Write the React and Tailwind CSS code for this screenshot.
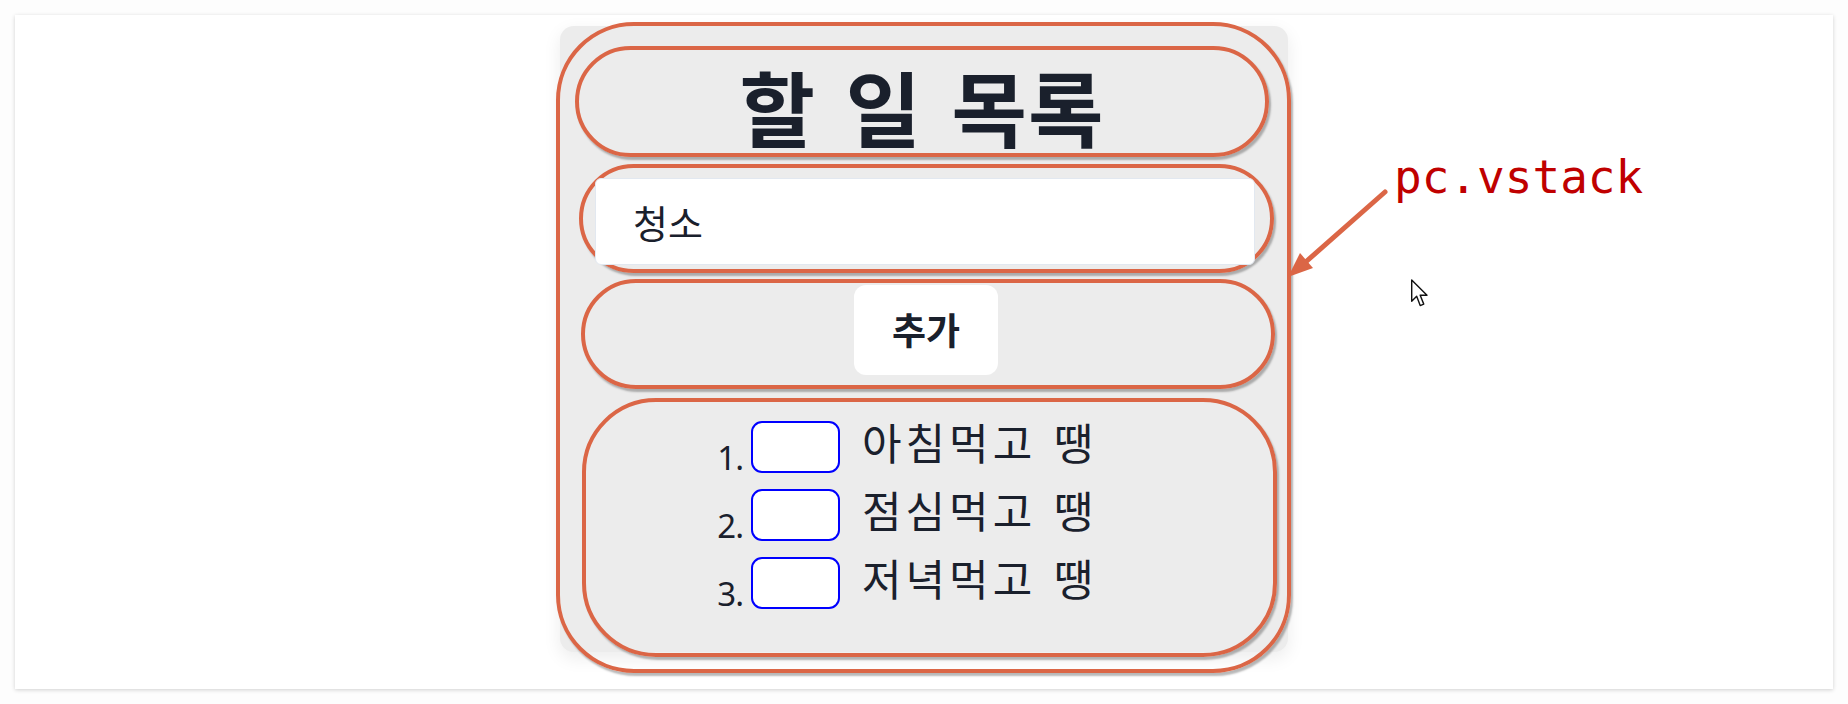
import React, { useState } from "react";

const font = { fontFamily: '"Noto Sans", "Noto Sans CJK KR", sans-serif' };
const kr = { fontFamily: '"Noto Sans CJK KR", sans-serif' };

const todos = ["아침먹고 땡", "점심먹고 땡", "저녁먹고 땡"];

const Cursor = () => (
  <svg width="17" height="29" viewBox="0 0 12 20" className="absolute left-[1396px] top-[264px]">
    <path
      d="M0.5 0.5 L0.5 15.5 L4 12 L6.5 18.5 L9 17.5 L6.5 11.2 L11.3 11.2 Z"
      fill="white"
      stroke="#111"
      strokeWidth="1"
      strokeLinejoin="round"
    />
  </svg>
);

export default function App() {
  const [todo, setTodo] = useState("청소");
  const [checked, setChecked] = useState([false, false, false]);

  return (
    <div
      className="w-full h-[704px] bg-[#fdfdfd] pt-[15px] pl-[15px] text-[#1a202c]"
      style={font}
    >
      {/* Frame */}
      <div className="relative w-[1818px] h-[674px] bg-white shadow-[0_1px_4px_rgba(0,0,0,0.18)] pt-[11px] pl-[545px]">
        {/* Card */}
        <div className="relative w-[728px] h-[626px] bg-[#ececec] rounded-[14px] shadow-[0_6px_18px_rgba(0,0,0,0.08)] pt-[20px] flex flex-col">
          {/* Title */}
          <div className="shrink-0 ml-[15px] w-[694px] h-[111px] rounded-[56px] border-4 border-[#db6646] shadow-[2px_3px_2px_rgba(0,0,0,0.28)] flex justify-center">
            <h1
              className="mt-[10px] text-[82px] leading-[92px] font-bold tracking-[1px] [word-spacing:10px]"
              style={kr}
            >
              할 일 목록
            </h1>
          </div>

          {/* Input */}
          <div className="shrink-0 mt-[7px] ml-[19px] w-[695px] h-[109px] rounded-[55px] border-4 border-[#db6646] shadow-[2px_3px_2px_rgba(0,0,0,0.28)] pt-[10px] pl-[12px]">
            <input
              value={todo}
              onChange={(e) => setTodo(e.target.value)}
              className="w-[660px] h-[87px] bg-white rounded-[6px] border border-[#e2e8f0] pl-[37px] text-[38px] outline-none"
              style={kr}
            />
          </div>

          {/* Button */}
          <div className="shrink-0 mt-[6px] ml-[21px] w-[694px] h-[110px] rounded-[55px] border-4 border-[#db6646] shadow-[2px_3px_2px_rgba(0,0,0,0.28)] pt-[2px] flex justify-center">
            <button
              className="w-[144px] h-[90px] bg-white rounded-[12px] text-[37px] font-bold ml-[-4px]"
              style={kr}
            >
              추가
            </button>
          </div>

          {/* List */}
          <div className="shrink-0 mt-[9px] ml-[22px] w-[695px] h-[259px] rounded-[74px] border-4 border-[#db6646] shadow-[2px_3px_2px_rgba(0,0,0,0.28)] pt-[19px] pl-[121px] flex flex-col gap-[16px]">
            {todos.map((t, i) => (
              <div key={t} className="flex items-end h-[52px]">
                <span className="w-[36px] text-[33px] leading-[33px] text-right mr-[8px] mb-[-1px] tracking-[-1px]">
                  {i + 1}.
                </span>
                <button
                  onClick={() =>
                    setChecked(checked.map((c, j) => (j === i ? !c : c)))
                  }
                  className="w-[89px] h-[52px] bg-white rounded-[11px] border-2 border-[#0000ff]"
                />
                <span
                  className="self-start ml-[22px] mt-[-6px] text-[43px] leading-[52px] tracking-[4px] [word-spacing:4px]"
                  style={kr}
                >
                  {t}
                </span>
              </div>
            ))}
          </div>

          {/* vstack annotation outline */}
          <div className="absolute left-[-4px] top-[-4px] w-[735px] h-[651px] rounded-[78px] border-4 border-[#db6646] shadow-[2px_3px_2px_rgba(0,0,0,0.28)] pointer-events-none" />
        </div>

        {/* Annotation label + arrow */}
        <div
          className="absolute left-[1379px] top-[132px] text-[46px] leading-[60px] text-[#c00000]"
          style={{ fontFamily: '"DejaVu Sans Mono", "Liberation Mono", monospace' }}
        >
          pc.vstack
        </div>
        <svg
          width="110"
          height="100"
          viewBox="0 0 110 100"
          className="absolute left-[1271px] top-[170px]"
        >
          <line x1="99" y1="7" x2="14" y2="82" stroke="#db6646" strokeWidth="5" strokeLinecap="round" />
          <polygon points="2,92 14,68 27,83" fill="#db6646" />
        </svg>
        <Cursor />
      </div>
    </div>
  );
}
